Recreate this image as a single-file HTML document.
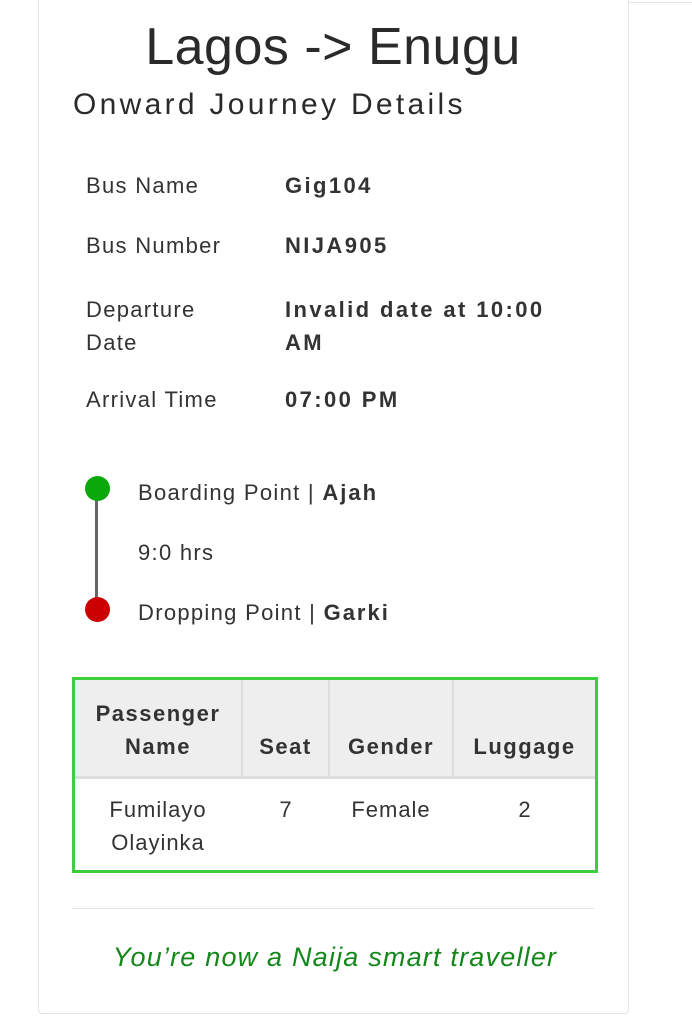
<html><head><style>
body{margin:0;width:692px;height:1024px;background:#fff;font-family:"Liberation Sans",sans-serif;color:#333;position:relative;overflow:hidden}
.a{position:absolute;white-space:nowrap}
.card{position:absolute;left:38px;top:-5px;width:589px;height:1017px;border:1px solid #e3e3e3;border-radius:4px}
.l{font-size:22px;color:#333;letter-spacing:1.3px}
.v{font-size:22px;font-weight:bold;letter-spacing:2.4px;color:#333}
</style></head><body>
<div class="a" style="left:628px;top:2px;width:64px;border-top:1px solid #e3e3e3"></div>
<div class="card"></div>
<div class="a" style="left:0;width:666px;top:17px;text-align:center;font-size:52px;color:#2a2a2a;letter-spacing:0.5px">Lagos -&gt; Enugu</div>
<div class="a" style="left:73px;top:88px;font-size:30px;color:#2a2a2a;letter-spacing:3.3px">Onward Journey Details</div>
<div class="a l" style="left:86px;top:173px">Bus Name</div><div class="a v" style="left:285px;top:173px">Gig104</div>
<div class="a l" style="left:86px;top:233px">Bus Number</div><div class="a v" style="left:285px;top:233px">NIJA905</div>
<div class="a l" style="left:86px;top:293px;line-height:33px">Departure<br>Date</div><div class="a v" style="left:285px;top:293px;line-height:33px">Invalid date at 10:00<br>AM</div>
<div class="a l" style="left:86px;top:387px">Arrival Time</div><div class="a v" style="left:285px;top:387px">07:00 PM</div>
<div class="a" style="left:95px;top:495px;width:3px;height:110px;background:#666"></div>
<div class="a" style="left:85px;top:476px;width:25px;height:25px;border-radius:50%;background:#0aa80a"></div>
<div class="a" style="left:85px;top:597px;width:25px;height:25px;border-radius:50%;background:#c00"></div>
<div class="a l" style="left:138px;top:480px">Boarding Point | <b style="letter-spacing:2px">Ajah</b></div>
<div class="a l" style="left:138px;top:540px">9:0 hrs</div>
<div class="a l" style="left:138px;top:600px">Dropping Point | <b style="letter-spacing:2px">Garki</b></div>
<div class="a" style="left:72px;top:677px;width:520px;height:190px;border:3px solid #3ccf3c">
<div class="a" style="left:0;top:0;width:520px;height:96px;background:#eee;border-bottom:3px solid #ddd"></div>
<div class="a" style="left:166px;top:0;width:2px;height:96px;background:#ddd"></div>
<div class="a" style="left:253px;top:0;width:2px;height:96px;background:#ddd"></div>
<div class="a" style="left:377px;top:0;width:2px;height:96px;background:#ddd"></div>
<div class="a" style="left:0;width:166px;top:17px;text-align:center;font-size:22px;font-weight:bold;letter-spacing:1.5px;line-height:33px">Passenger<br>Name</div>
<div class="a" style="left:168px;width:85px;top:50px;text-align:center;font-size:22px;font-weight:bold;letter-spacing:1.5px;line-height:33px">Seat</div>
<div class="a" style="left:255px;width:122px;top:50px;text-align:center;font-size:22px;font-weight:bold;letter-spacing:1.5px;line-height:33px">Gender</div>
<div class="a" style="left:379px;width:141px;top:50px;text-align:center;font-size:22px;font-weight:bold;letter-spacing:1.5px;line-height:33px">Luggage</div>
<div class="a" style="left:0;width:166px;top:113px;text-align:center;font-size:22px;line-height:33px;letter-spacing:1px">Fumilayo<br>Olayinka</div>
<div class="a" style="left:168px;width:85px;top:113px;text-align:center;font-size:22px;line-height:33px">7</div>
<div class="a" style="left:255px;width:122px;top:113px;text-align:center;font-size:22px;line-height:33px;letter-spacing:1px">Female</div>
<div class="a" style="left:379px;width:141px;top:113px;text-align:center;font-size:22px;line-height:33px">2</div>
</div>
<div class="a" style="left:72px;top:908px;width:522px;border-top:1px solid #e3e3e3"></div>
<div class="a" style="left:72px;width:526px;top:942px;text-align:center;font-size:27px;font-style:italic;color:#14871a;letter-spacing:1.2px">You’re now a Naija smart traveller</div>
</body></html>
